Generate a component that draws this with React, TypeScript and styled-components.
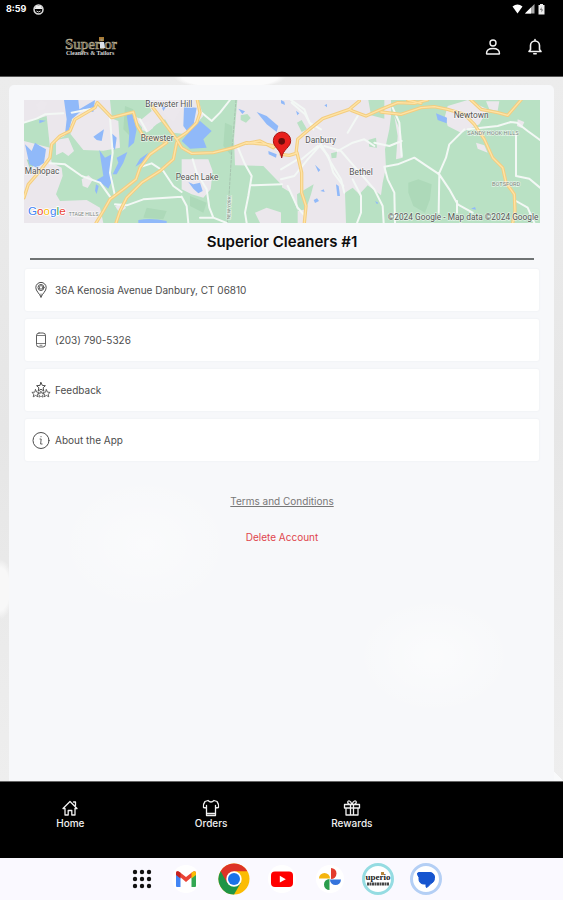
import React from "react";
import styled, { createGlobalStyle } from "styled-components";

const GlobalStyle = createGlobalStyle`
  *, *::before, *::after { box-sizing: border-box; }
  body {
    margin: 0;
    background: #000;
    font-family: Inter, "Open Sans", sans-serif;
  }
`;

const Screen = styled.div`
  min-height: 100vh;
  display: flex;
  flex-direction: column;
`;

const TopArea = styled.header`
  background: #000;
  color: #fff;
  border-bottom: 1px solid #555;
`;

const StatusBar = styled.div`
  display: flex;
  justify-content: space-between;
  align-items: center;
  height: 18px;
  padding: 0 18px 0 6px;
  font: 700 9px/18px Inter, sans-serif;
`;

const StatusGroup = styled.div<{ $gap: number }>`
  display: flex;
  align-items: center;
  gap: ${(p) => p.$gap}px;
`;

const AppBar = styled.div`
  display: flex;
  justify-content: space-between;
  align-items: center;
  height: 58px;
  padding: 0 18px 0 64px;
`;

const BarActions = styled.div`
  display: flex;
  gap: 22px;
`;

const IconButton = styled.button`
  display: grid;
  place-items: center;
  width: 20px;
  height: 20px;
  padding: 0;
  border: 0;
  background: none;
  color: #f2f2f2;
  cursor: pointer;
`;

const Backdrop = styled.main`
  flex: 1;
  display: flex;
  padding: 8px 9px 0;
  background:
    linear-gradient(45deg, #f9fafb 50%, transparent 50%) right bottom / 9px 9px no-repeat,
    radial-gradient(ellipse 56px 12px at 230px 0, #fbfbfb 85%, transparent),
    radial-gradient(ellipse 14px 30px at 0 512px, #f8f8f8 70%, transparent),
    linear-gradient(#ececec, #e6e6e6 50%, #eeeeee);
`;

const Panel = styled.section`
  flex: 1;
  min-width: 0;
  padding: 15px 14px 0 15px;
  border-radius: 5px 5px 0 0;
  background:
    radial-gradient(ellipse 90px 70px at 25% 66%, rgba(255, 255, 255, 0.4), transparent),
    radial-gradient(ellipse 80px 60px at 78% 82%, rgba(255, 255, 255, 0.5), transparent),
    #f7f8fa;
`;

const MapFrame = styled.div`
  height: 123px;
  overflow: hidden;

  svg { display: block; }
`;

const StoreName = styled.h1`
  margin: 0 6px 9px;
  padding: 9px 0 6px;
  border-bottom: 2px solid #6f7373;
  color: #0c0c0c;
  font-size: 15px;
  font-weight: 600;
  line-height: 20px;
  text-align: center;
`;

const RowList = styled.ul`
  display: grid;
  gap: 8px;
  margin: 0 1px;
  padding: 0;
  list-style: none;
`;

const Row = styled.a`
  display: flex;
  align-items: center;
  gap: 4px;
  height: 42px;
  padding: 0 6px;
  border-radius: 2px;
  background: #fff;
  box-shadow: 0 0 2px #e6ebef;
  color: #4d4d4d;
  font-size: 10px;
  font-weight: 400;
  line-height: 16px;
  text-decoration: none;
`;

const FootLinks = styled.div`
  display: flex;
  flex-direction: column;
  align-items: center;
  gap: 20px;
  padding: 32px 0;
`;

const TermsLink = styled.a`
  color: #777;
  font-size: 10px;
  line-height: 16px;
`;

const DeleteButton = styled.button`
  padding: 0;
  border: 0;
  background: none;
  color: #e0454c;
  font: 400 10px/16px Inter, sans-serif;
  cursor: pointer;
`;

const TabBar = styled.nav`
  display: grid;
  grid-template-columns: repeat(4, 1fr);
  height: 77px;
  padding-top: 17px;
  border-top: 1px solid #666;
  background: #000;
`;

const Tab = styled.a`
  display: flex;
  flex-direction: column;
  align-items: center;
  color: #f0f0f0;
  font-size: 10px;
  font-weight: 500;
  line-height: 12px;
  text-decoration: none;
`;

const Dock = styled.footer`
  display: flex;
  justify-content: center;
  height: 42px;
  background: #faf9ff;
`;

const DockButton = styled.button<{ $end?: boolean }>`
  display: flex;
  align-items: center;
  justify-content: ${(p) => (p.$end ? "flex-end" : "center")};
  width: 48px;
  padding: 0 ${(p) => (p.$end ? 10 : 0)}px;
  border: 0;
  background: none;
  cursor: pointer;
`;

const line = {
  fill: "none",
  stroke: "currentColor",
  strokeLinecap: "round" as const,
  strokeLinejoin: "round" as const,
};

const Logo = () => (
  <svg width="56" height="24" viewBox="0 0 56 24" role="img" aria-label="Superior Cleaners & Tailors">
    <rect x="35" y="2" width="5" height="4" fill="#a87a35" />
    <text x="1" y="14" fontFamily="Liberation Serif, serif" fontSize="15" fill="#26241d" stroke="#b5ab8e" strokeWidth="0.7">Superior</text>
    <path d="M36 7h4l1 6h-5z" fill="#dde3ea" />
    <text x="2" y="20" fontFamily="Liberation Serif, serif" fontSize="6" fontWeight="700" fill="#d8d8d8">Cleaners &amp; Tailors</text>
  </svg>
);

const GreenAreas = () => (
  <g fill="#b9e1c4">
    <path d="M72 62H196L200 110 215 150 190 172 160 185 150 215 155 250 185 265 188 290 168 345 180 365 260 362 300 385 310 431H780L765 400 800 385 846 400V318L790 260 705 258 702 180 712 62H595L610 110 560 165 520 160 495 120 470 135 440 160 410 125 370 95 335 120 285 70 255 100 220 140 205 60Z" />
    <path d="M72 130L140 110 150 205 110 195 72 185Z" />
    <path d="M330 62H440L455 95 425 120 400 110 360 120 335 110Z" />
    <g transform="translate(843 0)">
      <path d="M330 62H777V431H195L192 340 215 325 235 345 260 318 300 348 305 310 315 265 312 210 325 150 330 110Z" />
      <path d="M0 322L30 340 50 395 50 431H0ZM48 345L98 315 90 345 75 390 50 395ZM48 130L62 122 78 150 62 158ZM262 62H310V118L270 108ZM262 182L285 175 288 205 265 202ZM150 222l18-5 -2 18 -14 2Z" />
    </g>
    <path d="M722 108l20-4 10 12 -14 14 -16-8Z" />
  </g>
);

const PaleAreas = () => (
  <g fill="#ece8ed">
    <path d="M250 92L285 72 330 115 355 125 360 205 310 214 250 212 212 165 210 130Z" />
    <path d="M168 182L205 175 222 215 205 230 188 218 168 228ZM108 75l15-12 18 8 -6 18 -20 6ZM425 135l20-10 15 20 -15 12 -18-4Z" />
    <path d="M545 240H625L638 275 632 330 610 355 575 345 545 330ZM245 300l20-12 14 12 -16 26 -15-6ZM345 380l25-10 8 16 -20 14ZM470 62H560L520 130 480 95Z" />
    <g transform="translate(843 0)">
      <path d="M500 80L560 62 620 90 595 135 540 160 500 140 492 110ZM615 66h40l-5 28 -25-4ZM585 190l25 8 10 22 -30-12ZM710 120l20 8 -8 18 -14-6Z" />
      <path d="M340 110l20 50 5 75 -20 5 5-70Z" />
    </g>
  </g>
);

const DarkWoods = () => (
  <g fill="#add9b9">
    <path d="M80 240l30 10 -20 20ZM375 80l25 10 -10 80 -20-20ZM440 385l60 10 -10 25 -60-5ZM570 350l50 20 -10 30 -40-20ZM675 130l22 10 -2 90 -25-30Z" />
    <path d="M1225 310l30-10 40 15 -5 45 -15 40 -35-20 -15-40Z" />
  </g>
);

const Waters = () => (
  <g fill="#90b9f9">
    <path d="M192 62L235 62 238 90 285 62 280 98 250 90 215 120 205 165 195 165 200 120ZM75 195L95 215 105 190 120 200 138 210 132 250 110 265 88 255ZM380 108L398 105 410 150 402 190 385 205 388 160ZM298 212L315 235 335 225 330 265 338 300 325 328 308 315 285 305 310 290ZM382 218L370 250 350 285 338 285 355 250 350 235ZM335 162L350 175 345 212 336 200ZM280 172L312 150 305 185 290 182ZM406 262L420 238 445 220 425 250ZM552 82L590 85 580 140 600 125 635 155 610 180 620 205 570 208 545 185 565 160 550 140Z" />
    <path d="M565 308L580 315 600 310 608 335 595 342 580 328ZM415 422Q455 415 500 425L500 431H415ZM770 98L800 110 835 140 830 158 800 135ZM715 88l20 8 -8 8ZM805 215l25 10 -2 10 -22-10ZM288 315l8 5 -6 24 -5-10ZM118 122l20 2 -20 8ZM484 80l14 3 -8 12Z" />
    <g transform="translate(843 0)">
      <path d="M465 102L498 115 497 132 470 122ZM102 256l16 16 -6 6ZM98 362l10-5 6 8 -12 6ZM118 335l10-5 3 8ZM165 315l8 5 4 30 -8 0ZM0 62l10 5 2 10 -12-5ZM45 94l10 8 -6 6ZM130 78l8-4 0 10ZM570 388l12-5 3 8ZM282 365l10 5 -4 5ZM100 186l6-4 5 8Z" />
    </g>
  </g>
);

const minorRoads =
  "M72 130L110 118 135 105 190 102M215 100L275 88M330 115L338 220 330 280 345 350M150 252L195 255 245 290 300 310 330 352M345 375L380 378 430 360 545 352M545 352L560 380 565 431M425 262L455 252 490 275 520 320 545 338M578 240L590 280 620 330 628 385 640 415M640 415L600 415M640 415L680 431M605 100L635 125 660 100 690 62M440 155L420 120M712 200L735 255 755 290 745 350 735 400 740 431M755 318L846 315M875 70L915 105 940 150M960 200L985 230 1000 280 1030 320";
const minorRoadsRight =
  "M30 62L70 90 85 130 120 150M120 195L80 240 40 290 0 300M120 195L150 250 180 300 190 340M130 200L180 215 210 250 245 290 280 330 305 380 308 431M215 300L240 350 240 400 228 431M310 262L350 255 400 235 440 262 475 285 505 330 530 375 575 400M310 262L320 300 340 340 342 431M475 285L473 400M473 285L495 235 505 195 550 150M335 85L355 130 362 230M362 185L325 200 280 190M280 200L250 180 215 190 170 215M690 128L708 130 740 155 777 182M705 160V290L745 298 777 325M690 128L650 140 560 150M705 365L740 385 760 431M528 365V400M0 270L50 240M62 240L110 200M200 160L230 110M20 320L50 385 72 410";

const highways =
  "M72 355L85 315 120 275 150 235 155 195 180 170 210 155 225 120 285 85 292 70M292 70L335 115 400 98 412 140 430 170 490 185M455 80L500 140 530 180 545 205 575 222 640 220 700 205 740 190 800 195 846 205M530 180L560 160 590 130 600 100 592 62M500 190L450 225 420 265 408 300 370 330 330 360 310 395 288 431M530 190L520 240 480 275 425 310 380 355 360 395 348 431M740 192L780 185 820 205";
const highwaysRight =
  "M0 225L25 228 45 222 50 180 85 150 125 118 205 90 215 95 255 110 300 90 350 70 400 72 440 62M205 90L235 65M300 98L360 105 420 85 460 82 500 90 550 105 580 135 610 180 635 235 665 265 675 310 700 345 702 395 695 431M570 62L600 90 650 100 680 108 720 62M48 220L62 280 62 340 75 380 70 431M380 62L420 72";

const StoreMap = () => (
  <svg width="100%" height="100%" viewBox="72 62 1548 369" preserveAspectRatio="xMidYMid slice" role="img" aria-label="Map of the area around Danbury">
    <rect x="72" y="62" width="1548" height="369" fill="#ebe7ec" />
    <GreenAreas />
    <PaleAreas />
    <DarkWoods />
    <Waters />
    <g fill="none" strokeLinejoin="round" strokeLinecap="round">
      <path d="M708 62L695 220 682 431" stroke="#9db5a5" strokeWidth="2" strokeDasharray="8 5" />
      <g stroke="#f3f8f5" strokeWidth="6">
        <path d={minorRoads} />
        <path d={minorRoadsRight} transform="translate(843 0)" />
      </g>
      <g stroke="#f3cd80" strokeWidth="10">
        <path d={highways} />
        <path d={highwaysRight} transform="translate(843 0)" />
      </g>
      <g stroke="#ffe3a4" strokeWidth="4">
        <path d={highways} />
        <path d={highwaysRight} transform="translate(843 0)" />
      </g>
    </g>
    <g fontFamily="Roboto, sans-serif" fontSize="25" fill="#555" stroke="#fff" strokeWidth="4" paintOrder="stroke" strokeOpacity="0.6">
      <text x="436" y="84">Brewster Hill</text>
      <text x="422" y="184">Brewster</text>
      <text x="74" y="284">Mahopac</text>
      <text x="527" y="302">Peach Lake</text>
      <text x="916" y="192">Danbury</text>
      <text x="1048" y="286">Bethel</text>
      <text x="1361" y="116">Newtown</text>
      <g fontSize="17" fill="#7d8780">
        <text x="1402" y="167">SANDY HOOK HILLS</text>
        <text x="1476" y="319">BOTSFORD</text>
        <text x="206" y="411" fontSize="15">TTAGE HILLS</text>
        <text x="0" y="0" fontSize="14" transform="translate(691 420) rotate(-88)">NEW YORK</text>
      </g>
      <text x="1163" y="423">©2024 Google - Map data ©2024 Google</text>
    </g>
    <g fontFamily="Liberation Sans, sans-serif" fontSize="35">
      <text x="84" y="406" stroke="#fff" strokeWidth="5" paintOrder="stroke">
        <tspan fill="#4285f4">G</tspan>
        <tspan fill="#ea4335">o</tspan>
        <tspan fill="#fbbc05">o</tspan>
        <tspan fill="#4285f4">g</tspan>
        <tspan fill="#34a853">l</tspan>
        <tspan fill="#ea4335">e</tspan>
      </text>
    </g>
    <path d="M845 236C841 208 820 205 820 184a26 26 0 0 1 52 0C872 205 849 208 845 236Z" fill="#e8201d" stroke="#a81411" strokeWidth="3" />
    <circle cx="845" cy="186" r="10" fill="#6b0d0b" />
  </svg>
);

const PinIcon = () => (
  <svg width="20" height="20" viewBox="0 0 20 20" {...line}>
    <path d="M10 17C8.5 13.5 4.8 11 4.8 7.600a5.2 5.2 0 0 1 10.4 0C15.2 11 11.5 13.5 10 17Z" />
    <circle cx="10" cy="7.5" r="3" />
    <path d="M8.5 8.5v-2l1.5-1 1.5 1v2zM10 14v2" strokeWidth="0.8" />
  </svg>
);

const PhoneIcon = () => (
  <svg width="20" height="20" viewBox="0 0 20 20" {...line} opacity="0.9">
    <rect x="5.5" y="3" width="9" height="14" rx="2.5" />
    <path d="M5.5 5.5h9M5.5 13.5h9M9 15.3h2" strokeWidth="0.8" />
  </svg>
);

const star = "M0-4.500L1.300-1.600 4.400-1.300 2.100 .8 2.800 3.900 0 2.300-2.800 3.900-2.100.8-4.400-1.300-1.300-1.600Z";

const StarsIcon = () => (
  <svg width="20" height="20" viewBox="0 0 20 20" {...line}>
    <path d={star} transform="translate(10 7)" />
    <path d={star} transform="translate(4.6 13.5) scale(.85)" />
    <path d={star} transform="translate(15.4 13.5) scale(.85)" />
    <path d={star} transform="translate(10 14.5) scale(.7)" />
  </svg>
);

const InfoIcon = () => (
  <svg width="20" height="20" viewBox="0 0 20 20" {...line}>
    <circle cx="10" cy="10.5" r="8" />
    <path d="M9 9h1.200l-.6 5h1.500M10 6.500v.3" strokeWidth="0.9" />
  </svg>
);

const contactRows = [
  { label: "36A Kenosia Avenue Danbury, CT 06810", Icon: PinIcon },
  { label: "(203) 790-5326", Icon: PhoneIcon },
  { label: "Feedback", Icon: StarsIcon },
  { label: "About the App", Icon: InfoIcon },
];

const tabs = [
  {
    label: "Home",
    icon: <path d="M2 9.500L9 2.500l7 7H14v6.500H10.800v-4.500H7.200V16H4V9.500ZM12.500 3h2v3.500" />,
  },
  {
    label: "Orders",
    icon: <path d="M6 1.500Q9 4.500 12 1.500L15 2.500Q17 5 16.500 8.500L13.500 9V16.500H4.500V9L1.500 8.500Q1 5 3 2.500ZM4.500 9V6.500M13.500 9V6.500M5 14.500h8" />,
  },
  {
    label: "Rewards",
    icon: <path d="M1.500 5.500h15v3.500h-15zM3 9v7h12V9M7.500 5.500V16M10.500 5.500V16M9 5.500C3 5.500 4.500 1 6.500 2 8 2.500 9 5.500 9 5.500S10 2.500 11.500 2c2-1 3.500 3.500-2.500 3.500" />,
  },
];

const appIcons = [
  {
    label: "All apps",
    art: (
      <svg width="20" height="20" viewBox="0 0 20 20" fill="#111">
        {[3, 10, 17].map((y) => [3, 10, 17].map((x) => <circle key={`${x}-${y}`} cx={x} cy={y} r="2.2" />))}
      </svg>
    ),
  },
  {
    label: "Gmail",
    art: (
      <svg width="28" height="28" viewBox="0 0 28 28">
        <circle cx="14" cy="14" r="14" fill="#fff" />
        <path d="M4 9v12q0 1 1 1h3.500V12Z" fill="#4285f4" />
        <path d="M24 9v12q0 1-1 1h-3.500V12Z" fill="#34a853" />
        <path d="M4 8.500Q4 5 7.500 7L14 12l6.500-5Q24 5 24 8.500L14 17Z" fill="#ea4335" />
        <path d="M19.500 7.800Q24 4.500 24 8.500V10l-4.500 3.500Z" fill="#fbbc04" />
        <path d="M4 8.500V10l4.500 3.500V7.800Q4 4.500 4 8.500Z" fill="#c5221f" />
      </svg>
    ),
  },
  {
    label: "Chrome",
    art: (
      <svg width="32" height="32" viewBox="0 0 32 32">
        <circle cx="16" cy="16" r="15.5" fill="#fbbc04" />
        <path d="M16 16L2.600 8.200A15.500 15.500 0 0 0 16 31.500L22.700 20Z" fill="#1e9546" />
        <path d="M2.600 8.200A15.500 15.500 0 0 1 29.400 8.200H16L9.300 20Z" fill="#dd3327" />
        <circle cx="16" cy="16" r="7.7" fill="#fff" />
        <circle cx="16" cy="16" r="6" fill="#1a73e8" />
      </svg>
    ),
  },
  {
    label: "YouTube",
    art: (
      <svg width="28" height="28" viewBox="0 0 28 28">
        <circle cx="14" cy="14" r="14" fill="#fff" />
        <rect x="3" y="6.5" width="22" height="15.5" rx="4" fill="#f00" />
        <path d="M11.800 10.800v6.800l6-3.400Z" fill="#fff" />
      </svg>
    ),
  },
  {
    label: "Photos",
    art: (
      <svg width="28" height="28" viewBox="0 0 28 28">
        <circle cx="14" cy="14" r="14" fill="#fff" />
        <path d="M15 3a5.500 5.500 0 0 1 0 11Z" fill="#e33b2e" />
        <path d="M25 14.500a5.500 5.500 0 0 1-11 0Z" fill="#3574dc" />
        <path d="M13.500 25a5.500 5.500 0 0 1 0-11Z" fill="#2a9d4c" />
        <path d="M3 13.500a5.500 5.500 0 0 1 11 0Z" fill="#f5b50d" />
      </svg>
    ),
  },
  {
    label: "Superior Cleaners",
    art: (
      <svg width="32" height="32" viewBox="0 0 32 32">
        <circle cx="16" cy="16" r="14.5" fill="#fff" stroke="#95dce2" strokeWidth="3" />
        <text x="16" y="17" textAnchor="middle" fontFamily="Liberation Serif, serif" fontSize="9" fontWeight="700" fill="#222">uperio</text>
        <rect x="19" y="9" width="3" height="3" fill="#b8863b" />
        <path d="M5 21h22" stroke="#444" strokeWidth="3" strokeDasharray="2 .5" />
      </svg>
    ),
  },
  {
    label: "Messages",
    art: (
      <svg width="32" height="32" viewBox="0 0 32 32">
        <circle cx="16" cy="16" r="14.5" fill="#fff" stroke="#b4cff5" strokeWidth="3" />
        <path d="M13 9.500H20a4.500 4.500 0 0 1 4.500 4.500V15.500a5.500 5.500 0 0 1-3.500 5L17 24.500Q16 24.500 16 23.500V21H13.500a4.500 4.500 0 0 1-4.500-4.500V14.500L7.500 11.500Q7 9.500 9 9.500Z" fill="#1554cf" strokeLinejoin="round" stroke="#1554cf" />
      </svg>
    ),
  },
];

export default function App() {
  return (
    <>
      <GlobalStyle />
      <Screen>
        <TopArea>
          <StatusBar>
            <StatusGroup $gap={7}>
              <span>8:59</span>
              <svg width="11" height="11" viewBox="0 0 11 11" aria-hidden="true">
                <circle cx="5.5" cy="5.5" r="4.5" fill="none" stroke="#ddd" strokeWidth="1.5" />
                <path d="M1.500 5h8L8 2H3Z" fill="#eee" />
                <path d="M3.500 7q2 2 4 0" stroke="#ccc" fill="none" />
              </svg>
            </StatusGroup>
            <StatusGroup $gap={2}>
              <svg width="11" height="10" viewBox="0 0 11 10" fill="#fff" aria-hidden="true">
                <path d="M.5 2.500Q5.500-1.500 10.500 2.500L5.500 9.500Z" />
              </svg>
              <svg width="10" height="10" viewBox="0 0 10 10" aria-hidden="true">
                <path d="M0 9.500L9.500 0V9.500Z" fill="#aaa" />
                <path d="M0 9.500L6 3.500V9.500Z" fill="#fff" />
              </svg>
              <svg width="8" height="11" viewBox="0 0 8 11" aria-hidden="true">
                <path d="M3 0h3v1h1.500v9.500h-6V1H3Z" fill="#eee" />
                <path d="M4.500 3L3 6h1.500v2.500L6 5.500H4.500Z" fill="#666" />
              </svg>
            </StatusGroup>
          </StatusBar>
          <AppBar>
            <Logo />
            <BarActions>
              <IconButton aria-label="Profile">
                <svg width="18" height="18" viewBox="0 0 18 18" {...line} strokeWidth="1.4">
                  <circle cx="9" cy="5" r="3" />
                  <path d="M2.500 15.500Q2.500 10.500 9 10.500T15.500 15.500Q15.500 16 15 16H3Q2.500 16 2.500 15.500Z" />
                </svg>
              </IconButton>
              <IconButton aria-label="Notifications">
                <svg width="18" height="18" viewBox="0 0 18 18" {...line} strokeWidth="1.6">
                  <path d="M3 13.500L4.500 11.500V7.500a4.500 4.500 0 0 1 9 0v4L15 13.500ZM9 2.800V1.500M7.800 15.800h2.400" />
                </svg>
              </IconButton>
            </BarActions>
          </AppBar>
        </TopArea>

        <Backdrop>
          <Panel>
            <MapFrame>
              <StoreMap />
            </MapFrame>
            <StoreName>Superior Cleaners #1</StoreName>
            <RowList>
              {contactRows.map(({ label, Icon }) => (
                <li key={label}>
                  <Row href="#">
                    <Icon />
                    {label}
                  </Row>
                </li>
              ))}
            </RowList>
            <FootLinks>
              <TermsLink href="#">Terms and Conditions</TermsLink>
              <DeleteButton>Delete Account</DeleteButton>
            </FootLinks>
          </Panel>
        </Backdrop>

        <TabBar>
          {tabs.map((tab) => (
            <Tab key={tab.label} href="#">
              <svg width="18" height="18" viewBox="0 0 18 18" {...line} strokeWidth="1.3" aria-hidden="true">
                {tab.icon}
              </svg>
              {tab.label}
            </Tab>
          ))}
        </TabBar>

        <Dock>
          {appIcons.map((app, i) => (
            <DockButton key={app.label} aria-label={app.label} $end={i === 0}>
              {app.art}
            </DockButton>
          ))}
        </Dock>
      </Screen>
    </>
  );
}
